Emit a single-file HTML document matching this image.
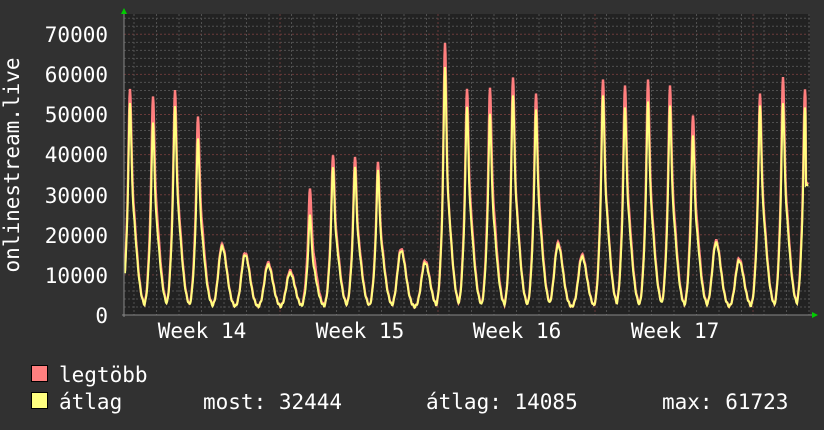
<!DOCTYPE html>
<html><head><meta charset="utf-8"><style>
body{margin:0;background:#313131;width:824px;height:430px;overflow:hidden}
svg{display:block}
text{font-family:"DejaVu Sans Mono","Liberation Mono",monospace;font-size:21px;fill:#fff}
</style></head><body>
<svg id="g" width="824" height="430" xmlns="http://www.w3.org/2000/svg">
<rect width="824" height="430" fill="#313131"/>
<rect x="124" y="14" width="686" height="301" fill="#222"/>
<g id="grid"></g>
<g id="data"></g>
<line x1="122" y1="315" x2="812" y2="315" stroke="#888" stroke-width="1"/>
<line x1="124" y1="12" x2="124" y2="317" stroke="#888" stroke-width="1"/>
<polygon points="121,14 127,14 124,8" fill="#0c0"/>
<polygon points="812,312 812,318 818,315" fill="#0c0"/>
<g text-anchor="end">
<text x="108" y="42">70000</text><text x="108" y="82">60000</text><text x="108" y="122">50000</text>
<text x="108" y="162">40000</text><text x="108" y="203">30000</text><text x="108" y="243">20000</text>
<text x="108" y="283">10000</text><text x="108" y="323">0</text>
</g>
<g text-anchor="middle">
<text x="202" y="338">Week 14</text><text x="360" y="338">Week 15</text>
<text x="517" y="338">Week 16</text><text x="675" y="338">Week 17</text>
</g>
<text transform="translate(19,165) rotate(-90)" text-anchor="middle">onlinestream.live</text>
<rect x="31.5" y="365.5" width="16" height="16" fill="#ff7f7f" stroke="#000"/>
<rect x="31.5" y="392.5" width="16" height="16" fill="#ffff7f" stroke="#000"/>
<text x="59" y="382">legtöbb</text>
<text x="59" y="409">átlag</text>
<text x="203" y="409">most: 32444</text>
<text x="426" y="409">átlag: 14085</text>
<text x="662" y="409">max: 61723</text>
</svg>
<script>
function Y(v){return 315-v/10000*40.1;}
var gr=document.getElementById('grid'),s='';
for(var i=1;i<=37;i++){var y=315-i*8.02;if(y<14)break;var maj=i%5==0;
s+='<line x1="124" x2="810" y1="'+y+'" y2="'+y+'" stroke="'+(maj?'#6a3a3a':'#505050')+'" stroke-dasharray="2,2"/>';}
for(var x=124+10;x<810;x+=22.5){
s+='<line y1="14" y2="315" x1="'+x+'" x2="'+x+'" stroke="#505050" stroke-dasharray="2,2"/>';}
[280,438,595,753].forEach(function(x){s+='<line y1="14" y2="315" x1="'+x+'" x2="'+x+'" stroke="#6a3a3a" stroke-dasharray="2,2"/>';});
gr.innerHTML=s;
var days=[[130,56.5,53],[153,54.5,48],[175,56,52],[198,49.5,44],[222,17.5,17],[245,15.5,15],[268,13,12.5],[290,11,10.5],[310,31.5,25],[333,40,37],[355,39.5,37],[378,38,36],[401,16.5,16],[425,13.5,13],[445,68,62],[467,56.5,52],[490,56.5,50],[513,59.5,55],[536,55,51],[558,18,17.5],[582,15,14.5],[603,59,55],[625,57.5,52],[648,58.5,53],[670,57,52],[693,50,45],[716,18.5,18],[739,14,13.5],[760,55,52],[783,59.5,53],[805,56.5,52]];
function g(d,s){return Math.exp(-d*d/(2*s*s));}
function build(idx){var pts=[];var base=1800;
 for(var x=125;x<=808;x+=0.5){var v=base;
  for(var d=0;d<days.length;d++){var P=days[d][0],p=days[d][idx]*1000,dx=x-P;if(Math.abs(dx)>16)continue;
   var w;
   if(p<20000){w=base+(p-base)*g(dx,dx<0?3.6:4.8);}
   else{var broad=Math.min(p*0.6,34000);var hb=(dx<0?g(dx,3.2):g(dx,5.4));var hs=g(dx,1.2);
     w=base+(broad-base)*hb+(p-broad)*hs;}
   v=Math.max(v,w);}
  if(x>=806)v=(idx==1?32800:32444);
  var j=Math.sin(x*2.3)*250;pts.push(x+','+Y(Math.max(1500,v+j)).toFixed(1));}
 return pts.join(' ');}
document.getElementById('data').innerHTML='<polyline fill="none" stroke="#ff7f7f" stroke-width="2.4" points="'+build(1)+'"/><polyline fill="none" stroke="#ffff7f" stroke-width="2" points="'+build(2)+'"/>';
</script>
</body></html>
